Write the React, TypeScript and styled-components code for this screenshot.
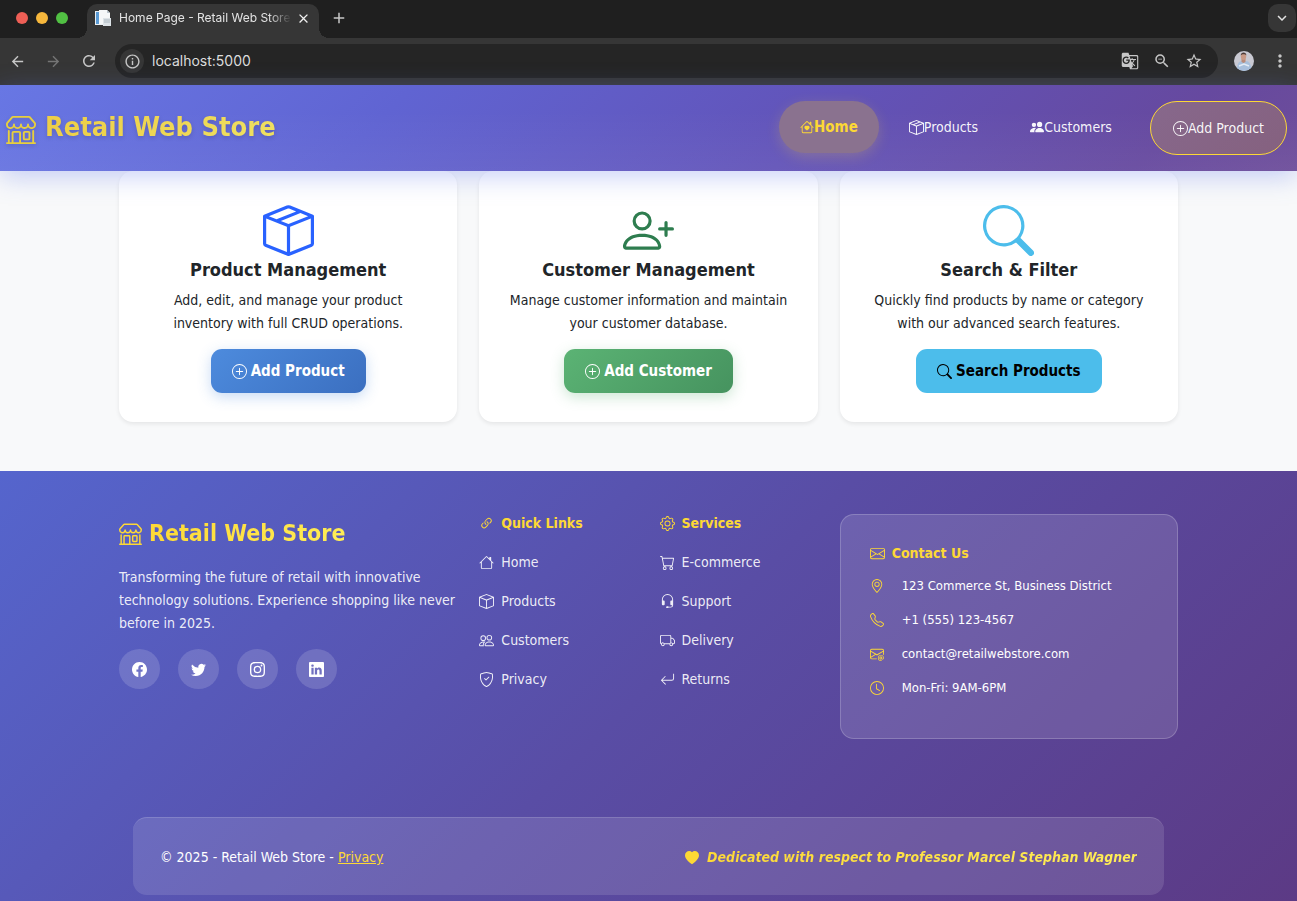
import React from "react";
import styled, { createGlobalStyle, css } from "styled-components";
import {
  BsArrowReturnLeft, BsBoxSeam, BsCart, BsClock, BsEnvelope, BsEnvelopeAt, BsFacebook, BsGear,
  BsGeoAlt, BsHeadset, BsHeartFill, BsHouse, BsHouseHeart, BsInstagram, BsLink45Deg, BsLinkedin,
  BsPeople, BsPeopleFill, BsPersonPlus, BsPlusCircle, BsSearch, BsShieldCheck, BsShop,
  BsTelephone, BsTruck, BsTwitter, BsBox,
} from "react-icons/bs";
import {
  MdAdd, MdArrowBack, MdArrowForward, MdClose, MdGTranslate, MdInfoOutline, MdKeyboardArrowDown,
  MdMoreVert, MdRefresh, MdStarBorder, MdZoomOut,
} from "react-icons/md";

const gold = "#fdd835";

const GlobalStyle = createGlobalStyle`
  *, *::before, *::after { box-sizing: border-box; }
  body {
    margin: 0;
    background: #f8f9fa;
    color: #212529;
    font-family: "DejaVu Sans Condensed", "DejaVu Sans", Tahoma, sans-serif;
    font-stretch: condensed;
    font-size: 14px;
    line-height: 23px;
  }
  h1, h2, h3, p, ul { margin: 0; padding: 0; }
  ul { list-style: none; }
  a { color: inherit; text-decoration: none; }
  button { font: inherit; cursor: pointer; }
  svg { display: block; flex: none; }
`;

const Page = styled.div`
  display: flex;
  flex-direction: column;
  height: 100vh;
  overflow: hidden;
`;

/* ---------- browser frame ---------- */

const TabStrip = styled.div`
  display: flex;
  align-items: flex-end;
  height: 38px;
  flex: none;
  background: #1f1f1f;
  font-family: Inter, sans-serif;
`;

const Lights = styled.div`
  display: flex;
  gap: 8px;
  padding: 0 19px 14px 16px;
`;

const Light = styled.span<{ $color: string }>`
  width: 12px;
  height: 12px;
  border-radius: 50%;
  background: ${(p) => p.$color};
`;

const Tab = styled.div`
  position: relative;
  display: flex;
  align-items: center;
  width: 232px;
  height: 34px;
  padding: 0 6px 6px 8px;
  border-radius: 10px 10px 0 0;
  background: #363636;
  color: #e3e3e3;
  &::before, &::after {
    content: "";
    position: absolute;
    bottom: 0;
    width: 10px;
    height: 10px;
  }
  &::before {
    left: -10px;
    background: radial-gradient(circle at 0 0, transparent 10px, #363636 10px);
  }
  &::after {
    right: -10px;
    background: radial-gradient(circle at 100% 0, transparent 10px, #363636 10px);
  }
`;

const TabTitle = styled.span`
  flex: 1;
  margin-left: 8px;
  white-space: nowrap;
  font-size: 12px;
  line-height: 16px;
  mask-image: linear-gradient(90deg, #000 86%, transparent 99%);
`;

const ChromeButton = styled.button<{ $dim?: boolean }>`
  display: flex;
  align-items: center;
  justify-content: center;
  flex: none;
  width: 20px;
  height: 20px;
  padding: 0;
  border: 0;
  background: none;
  color: ${(p) => (p.$dim ? "#757575" : "#c7c7c7")};
`;

const CloseTab = styled(ChromeButton)`
  color: #f1f1f1;
`;

const NewTab = styled(ChromeButton)`
  margin: 0 auto 10px 10px;
`;

const TabSearch = styled(ChromeButton)`
  width: 28px;
  height: 28px;
  margin: 0 1px 6px 0;
  border-radius: 10px;
  background: #363636;
  color: #e3e3e3;
`;

const Toolbar = styled.div`
  display: flex;
  align-items: center;
  flex: none;
  height: 47px;
  padding: 0 7px 1px;
  gap: 16px;
  background: #363636;
  font-family: Inter, sans-serif;
`;

const AddressBar = styled.div`
  display: flex;
  align-items: center;
  flex: 1;
  height: 34px;
  padding: 0 14px 0 5px;
  gap: 8px;
  border-radius: 17px;
  background: #252525;
`;

const SiteInfo = styled(ChromeButton)`
  width: 24px;
  height: 24px;
  border-radius: 50%;
  background: #363636;
`;

const Address = styled.input`
  flex: 1;
  min-width: 0;
  padding: 0;
  border: 0;
  outline: 0;
  background: none;
  color: #dcdcdc;
  font: 14px/20px Inter, sans-serif;
`;

const AddressActions = styled.div`
  display: flex;
  gap: 12px;
`;

/* ---------- site header ---------- */

const Header = styled.header`
  position: relative;
  z-index: 1;
  display: flex;
  align-items: flex-start;
  justify-content: space-between;
  flex: none;
  height: 86px;
  padding: 16px 10px 0 6px;
  background:
    linear-gradient(180deg, transparent 30%, rgba(255, 255, 255, 0.05)),
    linear-gradient(135deg, #6877e4 0%, #6064d2 30%, #6253b8 62%, #66499f 88%, #6d4d9a 100%);
  box-shadow: 0 6px 24px rgba(102, 126, 234, 0.35);
`;

const Brand = styled.a`
  display: flex;
  align-items: center;
  gap: 9px;
  margin-top: 9px;
  color: #e8cf3c;
  font-size: 27px;
  font-weight: 700;
  line-height: 34px;
  filter: drop-shadow(0 2px 2px rgba(0, 0, 0, 0.15));
  svg { margin-top: 4px; }
`;

const gradientText = css`
  background: linear-gradient(135deg, #fdd835, #ffee58);
  background-clip: text;
  -webkit-background-clip: text;
  color: transparent;
`;

const BrandText = styled.span`
  ${gradientText}
  opacity: 0.9;
`;

const Nav = styled.nav`
  display: flex;
  align-items: flex-start;
  gap: 8px;
`;

const NavLink = styled.a<{ $kind?: "active" | "outlined" }>`
  display: flex;
  align-items: center;
  height: 52px;
  padding: 0 22px;
  border-radius: 27px;
  color: rgba(255, 255, 255, 0.95);
  ${(p) => p.$kind === "active" && css`
    padding: 0 21px;
    background: #8a728f;
    color: ${gold};
    font-size: 15px;
    font-weight: 700;
    box-shadow: 0 4px 14px rgba(253, 216, 53, 0.2);
    svg { width: 14px; height: 14px; }
  `}
  ${(p) => p.$kind === "outlined" && css`
    height: 54px;
    margin-left: 8px;
    border: 1px solid ${gold};
    background: linear-gradient(135deg, #87688c, #85617f);
  `}
`;

/* ---------- feature cards ---------- */

const Container = styled.div`
  width: 100%;
  max-width: 1081px;
  margin: 0 auto;
`;

const Main = styled.main`
  flex: none;
  padding-bottom: 49px;
`;

const CardGrid = styled(Container)`
  display: grid;
  grid-template-columns: repeat(3, 1fr);
  gap: 22px;
  padding: 0 11px;
`;

const Card = styled.section`
  display: flex;
  flex-direction: column;
  align-items: center;
  padding: 34px 28px 29px;
  border-radius: 14px;
  background: #fff;
  box-shadow: 0 2px 4px rgba(0, 0, 0, 0.08);
  text-align: center;
`;

const CardTitle = styled.h2`
  margin: 3px 0 8px;
  font-size: 18px;
  line-height: 22px;
`;

const CardButton = styled.button<{ $bg: string; $glow: string; $color: string }>`
  display: flex;
  align-items: center;
  height: 44px;
  margin-top: 14px;
  padding: 0 21px;
  gap: 4px;
  border: 0;
  border-radius: 11px;
  background: ${(p) => p.$bg};
  box-shadow: 0 4px 14px ${(p) => p.$glow};
  color: ${(p) => p.$color};
  font-size: 15px;
  font-weight: 700;
`;

/* ---------- footer ---------- */

const Footer = styled.footer`
  flex: 1 0 auto;
  padding-top: 43px;
  background: linear-gradient(135deg, #5565cd 0%, #594da5 50%, #5c3a85 100%);
  color: #fff;
`;

const FooterColumns = styled(Container)`
  display: grid;
  grid-template-columns: 2fr 1fr 1fr 2fr;
  align-items: start;
`;

const Column = styled.section`
  padding: 0 11px;
`;

const FooterBrand = styled.h2`
  display: flex;
  align-items: center;
  gap: 7px;
  margin: 4px 0 18px;
  color: ${gold};
  font-size: 23px;
  line-height: 30px;
`;

const FooterBrandText = styled.span`
  ${gradientText}
`;

const Blurb = styled.p`
  color: rgba(255, 255, 255, 0.9);
`;

const Socials = styled.div`
  display: flex;
  gap: 18px;
  margin-top: 14px;
`;

const SocialLink = styled.a`
  display: flex;
  align-items: center;
  justify-content: center;
  width: 41px;
  height: 40px;
  border-radius: 50%;
  background: rgba(255, 255, 255, 0.15);
`;

const ColumnTitle = styled.h3`
  display: flex;
  align-items: center;
  gap: 7px;
  color: ${gold};
  font-size: 14px;
  line-height: 18px;
`;

const LinkList = styled.ul`
  display: flex;
  flex-direction: column;
  gap: 16px;
  margin-top: 19px;
`;

const FooterLink = styled.a`
  display: flex;
  align-items: center;
  gap: 7px;
  color: rgba(255, 255, 255, 0.9);
`;

const ContactCard = styled.div`
  height: 225px;
  padding: 29px;
  border: 1px solid rgba(255, 255, 255, 0.2);
  border-radius: 14px;
  background: rgba(255, 255, 255, 0.12);
`;

const ContactList = styled.ul`
  display: flex;
  flex-direction: column;
  gap: 11px;
  margin-top: 12px;
  font-size: 13px;
`;

const ContactItem = styled.li`
  display: flex;
  align-items: center;
  gap: 18px;
  svg { color: ${gold}; }
`;

const BottomBar = styled.div`
  display: flex;
  align-items: center;
  justify-content: space-between;
  height: 78px;
  margin: 78px 25px 0;
  padding: 2px 27px 0;
  border-top: 1px solid rgba(255, 255, 255, 0.15);
  border-radius: 14px;
  background: rgba(255, 255, 255, 0.12);
`;

const PrivacyLink = styled.a`
  color: ${gold};
  text-decoration: underline;
`;

const Dedication = styled.p`
  display: flex;
  align-items: center;
  gap: 8px;
  color: ${gold};
  font-style: italic;
  font-weight: 700;
`;

const DedicationText = styled.span`
  ${gradientText}
`;

const Favicon = () => (
  <svg width="16" height="16" viewBox="0 0 16 16" aria-hidden="true">
    <rect x="0" y="1" width="9" height="14" fill="#e9eef2" />
    <rect x="1" y="2" width="3" height="12" fill="#5b9bd5" />
    <path d="M4 0h8l3 3v11H4z" fill="#f5f7f8" />
    <path d="M12 0v3h3z" fill="#b9c4cc" />
    <rect x="8" y="8" width="8" height="8" fill="#dde3e7" />
    <path d="M9 10h6M9 12h6" stroke="#aab6be" />
  </svg>
);

const Avatar = () => (
  <svg width="20" height="20" viewBox="0 0 20 20" aria-label="Profile" role="img">
    <defs>
      <clipPath id="avatar-circle"><circle cx="10" cy="10" r="10" /></clipPath>
    </defs>
    <g clipPath="url(#avatar-circle)">
      <rect width="20" height="20" fill="#c9c9d2" />
      <path d="M3 20c0-6 1-9 4-10l3 1 3-1c3 1 4 4 5 10z" fill="#a9c0dc" />
      <path d="M7.500 8h4v3l-2 1-2-1z" fill="#b98a78" />
      <ellipse cx="9.500" cy="5.500" rx="2.700" ry="3.600" fill="#c99a87" />
      <path d="M6.700 4.500c0-4 5.800-4 5.700 0-1-1.600-4.500-1.600-5.700 0z" fill="#4c3a36" />
      <path d="M5 15l5-2 5 2" stroke="#e3ebf5" strokeWidth="1.500" fill="none" />
    </g>
  </svg>
);

const cards = [
  {
    title: "Product Management",
    text: "Add, edit, and manage your product inventory with full CRUD operations.",
    icon: <BsBoxSeam size={51} color="#2962ff" />,
    action: "Add Product",
    actionIcon: <BsPlusCircle />,
    bg: "linear-gradient(135deg, #4d8bdd, #3b6fc0)",
    glow: "rgba(74, 137, 220, 0.3)",
    color: "#fff",
  },
  {
    title: "Customer Management",
    text: "Manage customer information and maintain your customer database.",
    icon: <BsPersonPlus size={51} color="#2e7d4f" />,
    action: "Add Customer",
    actionIcon: <BsPlusCircle />,
    bg: "linear-gradient(135deg, #5bb374, #46935f)",
    glow: "rgba(86, 171, 110, 0.3)",
    color: "#fff",
  },
  {
    title: "Search & Filter",
    text: "Quickly find products by name or category with our advanced search features.",
    icon: <BsSearch size={51} color="#4cbdeb" />,
    action: "Search Products",
    actionIcon: <BsSearch />,
    bg: "#4cbdeb",
    glow: "transparent",
    color: "#000",
  },
];

const quickLinks = [
  { label: "Home", Icon: BsHouse },
  { label: "Products", Icon: BsBox },
  { label: "Customers", Icon: BsPeople },
  { label: "Privacy", Icon: BsShieldCheck },
];

const services = [
  { label: "E-commerce", Icon: BsCart },
  { label: "Support", Icon: BsHeadset },
  { label: "Delivery", Icon: BsTruck },
  { label: "Returns", Icon: BsArrowReturnLeft },
];

const contacts = [
  { label: "123 Commerce St, Business District", Icon: BsGeoAlt },
  { label: "+1 (555) 123-4567", Icon: BsTelephone },
  { label: "contact@retailwebstore.com", Icon: BsEnvelopeAt },
  { label: "Mon-Fri: 9AM-6PM", Icon: BsClock },
];

const socials = [
  { label: "Facebook", Icon: BsFacebook },
  { label: "Twitter", Icon: BsTwitter },
  { label: "Instagram", Icon: BsInstagram },
  { label: "LinkedIn", Icon: BsLinkedin },
];

type LinkItem = { label: string; Icon: React.ComponentType<{ size?: number }> };

const FooterLinks = ({ items }: { items: LinkItem[] }) => (
  <LinkList>
    {items.map(({ label, Icon }) => (
      <li key={label}>
        <FooterLink href="#"><Icon size={15} />{label}</FooterLink>
      </li>
    ))}
  </LinkList>
);

const BrowserFrame = () => (
  <>
    <TabStrip>
      <Lights>
        <Light $color="#ee5f56" />
        <Light $color="#f6b73c" />
        <Light $color="#51c043" />
      </Lights>
      <Tab>
        <Favicon />
        <TabTitle>Home Page - Retail Web Store</TabTitle>
        <CloseTab aria-label="Close tab"><MdClose size={15} /></CloseTab>
      </Tab>
      <NewTab aria-label="New tab"><MdAdd size={18} /></NewTab>
      <TabSearch aria-label="Search tabs"><MdKeyboardArrowDown size={18} /></TabSearch>
    </TabStrip>
    <Toolbar>
      <ChromeButton aria-label="Back"><MdArrowBack size={17} /></ChromeButton>
      <ChromeButton aria-label="Forward" $dim><MdArrowForward size={17} /></ChromeButton>
      <ChromeButton aria-label="Reload"><MdRefresh size={18} /></ChromeButton>
      <AddressBar>
        <SiteInfo aria-label="Site information"><MdInfoOutline size={17} /></SiteInfo>
        <Address aria-label="Address" defaultValue="localhost:5000" />
        <AddressActions>
          <ChromeButton aria-label="Translate"><MdGTranslate size={18} /></ChromeButton>
          <ChromeButton aria-label="Zoom"><MdZoomOut size={18} /></ChromeButton>
          <ChromeButton aria-label="Bookmark"><MdStarBorder size={18} /></ChromeButton>
        </AddressActions>
      </AddressBar>
      <ChromeButton aria-label="Profile"><Avatar /></ChromeButton>
      <ChromeButton aria-label="Menu"><MdMoreVert size={20} /></ChromeButton>
    </Toolbar>
  </>
);

export default function App() {
  return (
    <Page>
      <GlobalStyle />
      <BrowserFrame />
      <Header>
        <Brand href="#"><BsShop size={30} /><BrandText>Retail Web Store</BrandText></Brand>
        <Nav>
          <NavLink href="#" $kind="active"><BsHouseHeart />Home</NavLink>
          <NavLink href="#"><BsBoxSeam size={15} />Products</NavLink>
          <NavLink href="#"><BsPeopleFill />Customers</NavLink>
          <NavLink href="#" $kind="outlined"><BsPlusCircle size={15} />Add Product</NavLink>
        </Nav>
      </Header>
      <Main>
        <CardGrid>
          {cards.map((c) => (
            <Card key={c.title}>
              {c.icon}
              <CardTitle>{c.title}</CardTitle>
              <p>{c.text}</p>
              <CardButton $bg={c.bg} $glow={c.glow} $color={c.color}>{c.actionIcon}{c.action}</CardButton>
            </Card>
          ))}
        </CardGrid>
      </Main>
      <Footer>
        <FooterColumns>
          <Column>
            <FooterBrand><BsShop size={23} /><FooterBrandText>Retail Web Store</FooterBrandText></FooterBrand>
            <Blurb>
              Transforming the future of retail with innovative technology solutions. Experience
              shopping like never before in 2025.
            </Blurb>
            <Socials>
              {socials.map(({ label, Icon }) => (
                <SocialLink key={label} href="#" aria-label={label}><Icon size={15} /></SocialLink>
              ))}
            </Socials>
          </Column>
          <Column>
            <ColumnTitle><BsLink45Deg size={15} />Quick Links</ColumnTitle>
            <FooterLinks items={quickLinks} />
          </Column>
          <Column>
            <ColumnTitle><BsGear size={15} />Services</ColumnTitle>
            <FooterLinks items={services} />
          </Column>
          <Column>
            <ContactCard>
              <ColumnTitle><BsEnvelope size={15} />Contact Us</ColumnTitle>
              <ContactList>
                {contacts.map(({ label, Icon }) => (
                  <ContactItem key={label}><Icon size={14} />{label}</ContactItem>
                ))}
              </ContactList>
            </ContactCard>
          </Column>
        </FooterColumns>
        <Container>
          <BottomBar>
            <p>© 2025 - Retail Web Store - <PrivacyLink href="#">Privacy</PrivacyLink></p>
            <Dedication>
              <BsHeartFill size={14} />
              <DedicationText>Dedicated with respect to Professor Marcel Stephan Wagner</DedicationText>
            </Dedication>
          </BottomBar>
        </Container>
      </Footer>
    </Page>
  );
}
